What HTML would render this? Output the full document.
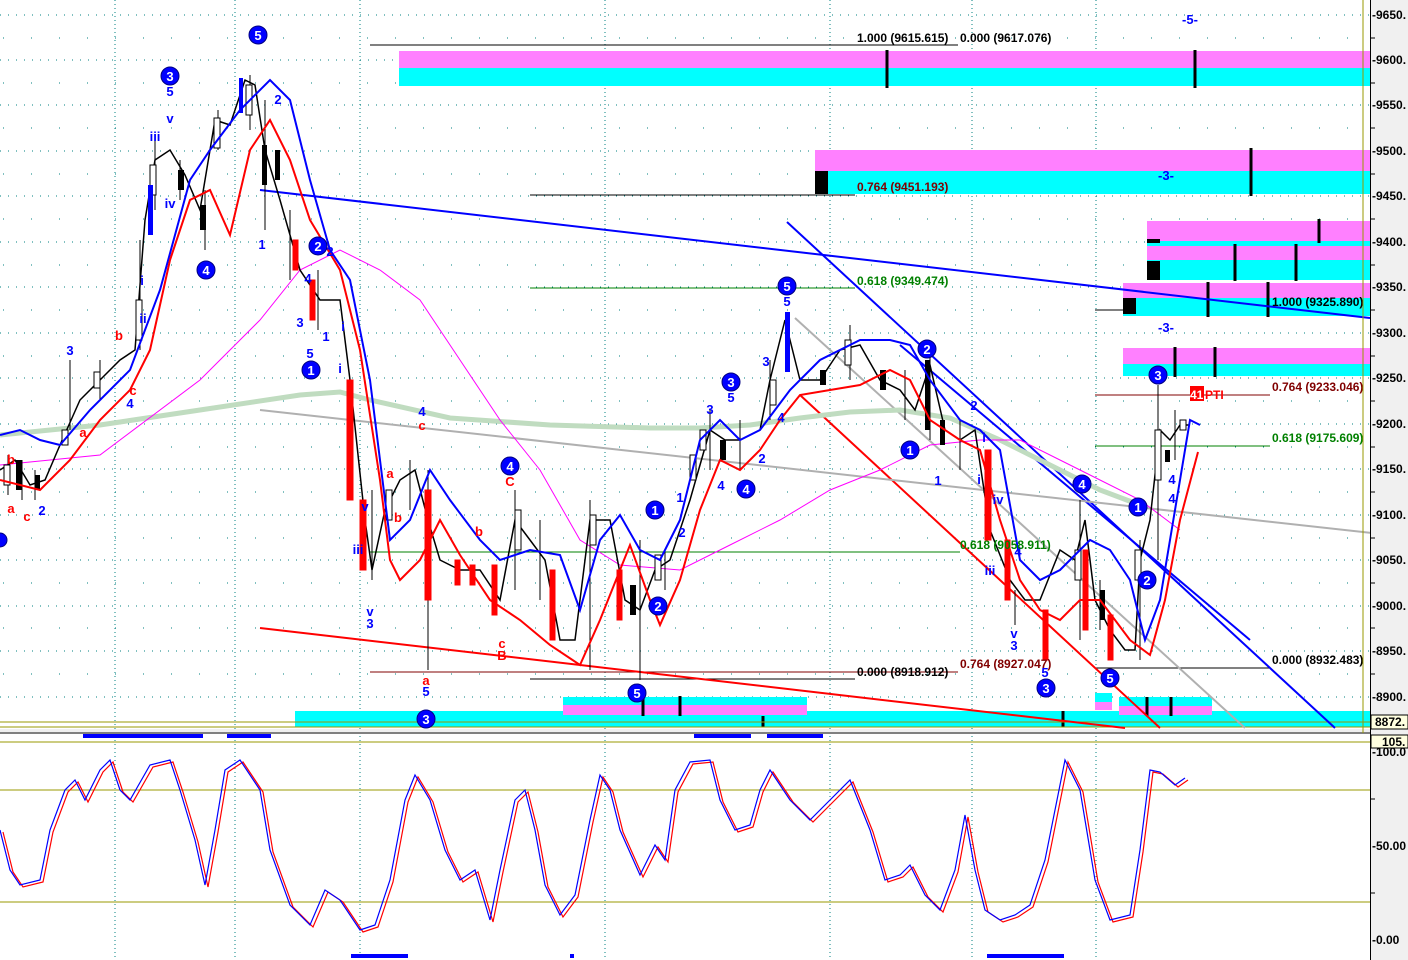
<!DOCTYPE html>
<html><head><meta charset="utf-8"><style>
html,body{margin:0;padding:0;background:#fff;width:1408px;height:960px;overflow:hidden}
svg{display:block}
text{font-family:"Liberation Sans",sans-serif}
</style></head><body>
<svg width="1408" height="960" viewBox="0 0 1408 960" xmlns="http://www.w3.org/2000/svg">
<rect width="1408" height="960" fill="#fff"/>
<g stroke="#008080" stroke-width="1">
<g stroke-dasharray="1 7">
<line x1="0" y1="15" x2="1370" y2="15"/><line x1="0" y1="60" x2="1370" y2="60"/><line x1="0" y1="105" x2="1370" y2="105"/><line x1="0" y1="151" x2="1370" y2="151"/><line x1="0" y1="196" x2="1370" y2="196"/><line x1="0" y1="242" x2="1370" y2="242"/><line x1="0" y1="287" x2="1370" y2="287"/><line x1="0" y1="333" x2="1370" y2="333"/><line x1="0" y1="378" x2="1370" y2="378"/><line x1="0" y1="424" x2="1370" y2="424"/><line x1="0" y1="469" x2="1370" y2="469"/><line x1="0" y1="515" x2="1370" y2="515"/><line x1="0" y1="560" x2="1370" y2="560"/><line x1="0" y1="606" x2="1370" y2="606"/><line x1="0" y1="651" x2="1370" y2="651"/><line x1="0" y1="697" x2="1370" y2="697"/>
</g>
<g stroke-dasharray="1 27">
<line x1="3" y1="38" x2="1370" y2="38"/><line x1="3" y1="83" x2="1370" y2="83"/><line x1="3" y1="128" x2="1370" y2="128"/><line x1="3" y1="174" x2="1370" y2="174"/><line x1="3" y1="219" x2="1370" y2="219"/><line x1="3" y1="265" x2="1370" y2="265"/><line x1="3" y1="310" x2="1370" y2="310"/><line x1="3" y1="356" x2="1370" y2="356"/><line x1="3" y1="401" x2="1370" y2="401"/><line x1="3" y1="447" x2="1370" y2="447"/><line x1="3" y1="492" x2="1370" y2="492"/><line x1="3" y1="538" x2="1370" y2="538"/><line x1="3" y1="583" x2="1370" y2="583"/><line x1="3" y1="628" x2="1370" y2="628"/><line x1="3" y1="674" x2="1370" y2="674"/>
</g>
<g stroke-dasharray="1 3">
<line x1="115" y1="0" x2="115" y2="960"/><line x1="235" y1="0" x2="235" y2="960"/><line x1="360" y1="0" x2="360" y2="960"/><line x1="605" y1="0" x2="605" y2="960"/><line x1="830" y1="0" x2="830" y2="960"/><line x1="972" y1="0" x2="972" y2="960"/><line x1="1096" y1="0" x2="1096" y2="960"/>
</g>
</g>
<rect x="399" y="51" width="971" height="17" fill="#ff80ff"/><rect x="399" y="68" width="971" height="18" fill="#00ffff"/>
<rect x="815" y="150" width="555" height="21" fill="#ff80ff"/><rect x="815" y="171" width="555" height="23" fill="#00ffff"/>
<rect x="815" y="171" width="13" height="23" fill="#000"/>
<rect x="1147" y="221" width="223" height="20" fill="#ff80ff"/><rect x="1147" y="241" width="223" height="5" fill="#00ffff"/><rect x="1147" y="246" width="223" height="14" fill="#ff80ff"/><rect x="1147" y="260" width="223" height="20" fill="#00ffff"/>
<rect x="1147" y="239" width="13" height="4" fill="#000"/><rect x="1147" y="261" width="13" height="19" fill="#000"/>
<rect x="1123" y="283" width="247" height="15" fill="#ff80ff"/><rect x="1123" y="298" width="247" height="18" fill="#00ffff"/>
<rect x="1123" y="298" width="13" height="16" fill="#000"/>
<rect x="1123" y="348" width="247" height="16" fill="#ff80ff"/><rect x="1123" y="364" width="247" height="12" fill="#00ffff"/>
<rect x="295" y="711" width="1075" height="16" fill="#00ffff"/>
<rect x="563" y="697" width="244" height="8" fill="#00ffff"/><rect x="563" y="705" width="244" height="10" fill="#ff80ff"/>
<rect x="1095" y="693" width="17" height="9" fill="#00ffff"/><rect x="1095" y="702" width="17" height="8" fill="#ff80ff"/>
<rect x="1119" y="697" width="93" height="9" fill="#00ffff"/><rect x="1119" y="706" width="93" height="9" fill="#ff80ff"/>
<g stroke="#000" stroke-width="3">
<line x1="887" y1="50" x2="887" y2="88"/><line x1="1195" y1="50" x2="1195" y2="88"/><line x1="1251" y1="148" x2="1251" y2="196"/><line x1="1319" y1="219" x2="1319" y2="243"/><line x1="1235" y1="244" x2="1235" y2="281"/><line x1="1296" y1="244" x2="1296" y2="281"/><line x1="1208" y1="282" x2="1208" y2="317"/><line x1="1268" y1="282" x2="1268" y2="317"/><line x1="1175" y1="347" x2="1175" y2="377"/><line x1="1215" y1="347" x2="1215" y2="377"/><line x1="643" y1="696" x2="643" y2="716"/><line x1="680" y1="696" x2="680" y2="716"/><line x1="1147" y1="697" x2="1147" y2="716"/><line x1="1171" y1="697" x2="1171" y2="716"/><line x1="1063" y1="711" x2="1063" y2="727"/><line x1="763" y1="716" x2="763" y2="727"/>
</g>
<line x1="0" y1="722" x2="1370" y2="722" stroke="#999900"/><line x1="0" y1="727" x2="1370" y2="727" stroke="#999900"/>
<line x1="370" y1="45" x2="958" y2="45" stroke="#000"/>
<line x1="530" y1="195" x2="855" y2="195" stroke="#000"/>
<line x1="530" y1="288" x2="855" y2="288" stroke="#008000"/>
<line x1="370" y1="552" x2="960" y2="552" stroke="#008000"/>
<line x1="370" y1="672" x2="958" y2="672" stroke="#800000"/>
<line x1="530" y1="679" x2="855" y2="679" stroke="#000"/>
<line x1="1095" y1="668" x2="1270" y2="668" stroke="#000"/>
<line x1="1095" y1="395" x2="1270" y2="395" stroke="#800000"/>
<line x1="1095" y1="446" x2="1270" y2="446" stroke="#008000"/>
<line x1="1095" y1="310" x2="1130" y2="310" stroke="#000"/>
<line x1="260" y1="190" x2="1370" y2="318" stroke="#0000ff" stroke-width="2"/>
<line x1="787" y1="222" x2="1335" y2="728" stroke="#0000ff" stroke-width="2"/>
<line x1="900" y1="345" x2="1250" y2="640" stroke="#0000ff" stroke-width="2"/>
<line x1="800" y1="395" x2="1160" y2="728" stroke="#ff0000" stroke-width="2"/>
<line x1="260" y1="628" x2="1125" y2="728" stroke="#ff0000" stroke-width="2"/>
<line x1="260" y1="410" x2="1408" y2="537" stroke="#b0b0b0" stroke-width="2"/>
<line x1="795" y1="318" x2="1245" y2="728" stroke="#b0b0b0" stroke-width="2"/>
<polyline fill="none" stroke="#c0dcc0" stroke-width="5" points="0,435 100,425 200,410 300,395 340,392 370,400 450,418 550,425 650,428 700,428 750,425 800,418 850,412 900,410 950,418 1000,440 1050,465 1100,490 1140,505"/>
<polyline fill="none" stroke="#ff00ff" stroke-width="1" points="0,465 100,455 200,380 260,320 300,270 340,250 380,270 420,300 460,360 500,420 540,470 580,540 620,565 680,570 730,545 780,520 830,490 880,470 930,445 980,440 1020,440 1060,460 1100,480 1140,500 1180,530"/>
<!-- price wicks -->
<g stroke="#000" stroke-width="1">
<line x1="8" y1="455" x2="8" y2="495"/><line x1="22" y1="460" x2="22" y2="500"/><line x1="35" y1="470" x2="35" y2="500"/><line x1="70" y1="360" x2="70" y2="430"/><line x1="100" y1="360" x2="100" y2="400"/><line x1="140" y1="240" x2="140" y2="350"/><line x1="155" y1="140" x2="155" y2="210"/><line x1="180" y1="160" x2="180" y2="200"/><line x1="205" y1="190" x2="205" y2="250"/><line x1="218" y1="110" x2="218" y2="150"/><line x1="250" y1="75" x2="250" y2="130"/><line x1="265" y1="100" x2="265" y2="230"/><line x1="290" y1="210" x2="290" y2="280"/><line x1="318" y1="270" x2="318" y2="330"/><line x1="372" y1="490" x2="372" y2="580"/><line x1="410" y1="460" x2="410" y2="510"/><line x1="428" y1="470" x2="428" y2="670"/><line x1="515" y1="490" x2="515" y2="590"/><line x1="540" y1="520" x2="540" y2="600"/><line x1="590" y1="500" x2="590" y2="670"/><line x1="640" y1="540" x2="640" y2="680"/><line x1="665" y1="550" x2="665" y2="590"/><line x1="710" y1="410" x2="710" y2="470"/><line x1="740" y1="420" x2="740" y2="470"/><line x1="770" y1="360" x2="770" y2="420"/><line x1="850" y1="325" x2="850" y2="380"/><line x1="905" y1="370" x2="905" y2="420"/><line x1="930" y1="355" x2="930" y2="440"/><line x1="960" y1="420" x2="960" y2="470"/><line x1="1015" y1="590" x2="1015" y2="625"/><line x1="1080" y1="500" x2="1080" y2="640"/><line x1="1100" y1="580" x2="1100" y2="630"/><line x1="1140" y1="540" x2="1140" y2="660"/><line x1="1158" y1="385" x2="1158" y2="560"/><line x1="1175" y1="410" x2="1175" y2="460"/>
</g>
<polyline fill="none" stroke="#000" stroke-width="1.5" points="0,470 15,460 30,485 45,480 60,445 80,400 100,380 120,360 135,350 145,220 155,160 170,150 185,175 200,210 215,120 230,125 245,80 255,85 265,150 280,200 300,270 320,300 340,300 350,380 365,520 372,570 385,510 400,480 415,470 428,520 440,560 460,570 480,570 500,600 515,520 530,540 545,560 560,640 575,640 590,520 610,520 625,600 640,610 655,570 670,560 690,500 710,430 725,440 740,440 760,430 770,380 785,320 800,380 820,380 840,350 860,345 880,380 900,390 915,410 930,365 945,430 960,440 975,430 990,530 1010,580 1025,600 1040,600 1060,550 1075,560 1085,520 1095,600 1110,630 1125,650 1135,650 1140,560 1150,520 1160,430 1170,440 1180,425 1190,425"/>
<g fill="#fff" stroke="#000" stroke-width="1">
<rect x="4" y="465" width="6" height="20"/><rect x="62" y="430" width="6" height="15"/><rect x="94" y="372" width="6" height="16"/><rect x="136" y="300" width="6" height="40"/><rect x="150" y="165" width="6" height="30"/><rect x="214" y="118" width="6" height="30"/><rect x="246" y="85" width="6" height="30"/><rect x="386" y="490" width="6" height="30"/><rect x="515" y="510" width="6" height="40"/><rect x="590" y="515" width="6" height="30"/><rect x="655" y="555" width="6" height="25"/><rect x="690" y="455" width="6" height="25"/><rect x="700" y="430" width="6" height="20"/><rect x="770" y="380" width="6" height="25"/><rect x="845" y="340" width="6" height="25"/><rect x="1075" y="550" width="6" height="30"/><rect x="1135" y="550" width="6" height="30"/><rect x="1155" y="430" width="6" height="50"/><rect x="1180" y="420" width="6" height="10"/>
</g>
<g fill="#000"><rect x="16" y="460" width="6" height="30"/><rect x="35" y="475" width="5" height="15"/><rect x="178" y="170" width="6" height="20"/><rect x="200" y="205" width="6" height="25"/><rect x="262" y="145" width="5" height="40"/><rect x="275" y="150" width="5" height="30"/><rect x="630" y="585" width="6" height="30"/><rect x="720" y="440" width="6" height="20"/><rect x="820" y="370" width="6" height="15"/><rect x="880" y="370" width="6" height="20"/><rect x="925" y="360" width="5" height="70"/><rect x="940" y="420" width="5" height="25"/><rect x="1100" y="590" width="5" height="30"/><rect x="1165" y="450" width="5" height="12"/></g>
<g fill="#ff0000" stroke="#ff0000"><rect x="347" y="380" width="6" height="120"/><rect x="360" y="500" width="6" height="70"/><rect x="425" y="490" width="6" height="110"/><rect x="492" y="565" width="5" height="50"/><rect x="550" y="570" width="5" height="70"/><rect x="617" y="570" width="5" height="50"/><rect x="985" y="450" width="6" height="90"/><rect x="1005" y="540" width="5" height="60"/><rect x="1043" y="610" width="5" height="50"/><rect x="1083" y="550" width="5" height="80"/><rect x="1108" y="615" width="5" height="45"/><rect x="293" y="240" width="5" height="30"/><rect x="310" y="280" width="5" height="40"/><rect x="455" y="560" width="5" height="25"/><rect x="470" y="565" width="5" height="20"/></g>
<g fill="#0000ff"><rect x="239" y="78" width="4" height="35"/><rect x="785" y="312" width="5" height="60"/><rect x="148" y="185" width="5" height="50"/></g>
<polyline fill="none" stroke="#0000ff" stroke-width="2" points="0,435 20,430 40,440 60,445 90,410 130,370 160,290 190,180 210,150 240,110 270,80 290,100 310,180 330,250 350,280 370,380 390,540 410,520 430,470 450,500 480,540 500,560 530,550 560,555 580,610 600,540 620,515 640,550 660,560 680,520 700,440 720,420 740,440 760,430 790,390 820,360 860,340 890,340 910,345 930,380 960,420 980,430 1000,450 1020,560 1040,580 1060,570 1090,540 1110,550 1130,580 1145,640 1160,600 1175,510 1190,420 1200,425"/>
<polyline fill="none" stroke="#ff0000" stroke-width="2" points="0,480 40,490 70,460 100,420 130,390 150,350 170,260 190,200 210,190 230,235 250,150 270,120 290,160 310,220 340,270 360,350 380,480 390,560 400,580 420,560 440,520 460,555 490,600 520,620 550,645 580,665 600,620 630,545 650,600 660,625 680,580 700,510 720,460 740,470 760,450 780,420 800,395 830,390 860,385 890,370 910,380 930,420 960,440 980,450 1000,520 1020,580 1040,610 1060,620 1080,600 1100,600 1130,640 1150,655 1165,600 1180,520 1198,452"/>
<g fill="#0000ff" stroke="#000080" stroke-width="1">
<circle cx="258" cy="35" r="9"/><circle cx="170" cy="76" r="9"/><circle cx="206" cy="270" r="9"/><circle cx="318" cy="246" r="9"/><circle cx="311" cy="370" r="9"/><circle cx="510" cy="466" r="9"/><circle cx="655" cy="510" r="9"/><circle cx="658" cy="606" r="9"/><circle cx="637" cy="693" r="9"/><circle cx="426" cy="719" r="9"/><circle cx="731" cy="382" r="9"/><circle cx="746" cy="489" r="9"/><circle cx="787" cy="286" r="9"/><circle cx="927" cy="349" r="9"/><circle cx="910" cy="450" r="9"/><circle cx="1082" cy="484" r="9"/><circle cx="1138" cy="507" r="9"/><circle cx="1147" cy="580" r="9"/><circle cx="1158" cy="375" r="9"/><circle cx="1110" cy="678" r="9"/><circle cx="1046" cy="688" r="9"/><circle cx="0" cy="540" r="7"/>
</g>
<g fill="#fff" font-size="13" font-weight="bold" text-anchor="middle">
<text x="258" y="40">5</text><text x="170" y="81">3</text><text x="206" y="275">4</text><text x="318" y="251">2</text><text x="311" y="375">1</text><text x="510" y="471">4</text><text x="655" y="515">1</text><text x="658" y="611">2</text><text x="637" y="698">5</text><text x="426" y="724">3</text><text x="731" y="387">3</text><text x="746" y="494">4</text><text x="787" y="291">5</text><text x="927" y="354">2</text><text x="910" y="455">1</text><text x="1082" y="489">4</text><text x="1138" y="512">1</text><text x="1147" y="585">2</text><text x="1158" y="380">3</text><text x="1110" y="683">5</text><text x="1046" y="693">3</text>
</g>
<g fill="#0000ff" font-size="13" font-weight="bold" text-anchor="middle">
<text x="170" y="96">5</text><text x="170" y="123">v</text><text x="155" y="141">iii</text><text x="170" y="208">iv</text><text x="142" y="285">i</text><text x="143" y="323">ii</text><text x="70" y="355">3</text><text x="130" y="408">4</text><text x="42" y="515">2</text><text x="278" y="104">2</text><text x="262" y="249">1</text><text x="330" y="256">2</text><text x="300" y="327">3</text><text x="308" y="283">4</text><text x="326" y="341">1</text><text x="310" y="358">5</text><text x="343" y="331">i</text><text x="340" y="373">i</text><text x="365" y="511">v</text><text x="358" y="554">iii</text><text x="370" y="616">v</text><text x="370" y="628">3</text><text x="422" y="416">4</text><text x="426" y="696">5</text><text x="680" y="502">1</text><text x="682" y="537">2</text><text x="710" y="414">3</text><text x="731" y="402">5</text><text x="721" y="490">4</text><text x="766" y="366">3</text><text x="781" y="422">4</text><text x="762" y="463">2</text><text x="787" y="306">5</text><text x="974" y="410">2</text><text x="984" y="442">i</text><text x="938" y="485">1</text><text x="998" y="504">iv</text><text x="979" y="484">i</text><text x="990" y="575">iii</text><text x="1014" y="638">v</text><text x="1014" y="650">3</text><text x="1045" y="677">5</text><text x="1018" y="556">4</text><text x="1166" y="332">-3-</text><text x="1166" y="180">-3-</text><text x="1190" y="24">-5-</text><text x="1172" y="484">4</text><text x="1172" y="503">4</text>
</g>
<g fill="#ff0000" font-size="13" font-weight="bold" text-anchor="middle">
<text x="119" y="340">b</text><text x="133" y="395">c</text><text x="11" y="464">b</text><text x="11" y="513">a</text><text x="27" y="521">c</text><text x="83" y="437">a</text><text x="422" y="430">c</text><text x="390" y="478">a</text><text x="398" y="522">b</text><text x="426" y="685">a</text><text x="510" y="486">C</text><text x="479" y="536">b</text><text x="502" y="648">c</text><text x="502" y="660">B</text>
</g>
<g font-size="12" font-weight="bold">
<text x="857" y="42" fill="#000">1.000 (9615.615)</text><text x="960" y="42" fill="#000">0.000 (9617.076)</text>
<text x="857" y="191" fill="#800000">0.764 (9451.193)</text>
<text x="857" y="285" fill="#008000">0.618 (9349.474)</text>
<text x="960" y="549" fill="#008000">0.618 (9058.911)</text>
<text x="857" y="676" fill="#000">0.000 (8918.912)</text>
<text x="960" y="668" fill="#800000">0.764 (8927.047)</text>
<text x="1272" y="306" fill="#000">1.000 (9325.890)</text>
<text x="1272" y="391" fill="#800000">0.764 (9233.046)</text>
<text x="1272" y="442" fill="#008000">0.618 (9175.609)</text>
<text x="1272" y="664" fill="#000">0.000 (8932.483)</text>
</g>
<rect x="1190" y="386" width="14" height="15" fill="#ff0000"/>
<text x="1190" y="399" fill="#fff" font-size="12" font-weight="bold">41</text>
<text x="1205" y="399" fill="#ff0000" font-size="12" font-weight="bold">PTI</text>
<g fill="#0000ff"><rect x="83" y="734" width="120" height="4"/><rect x="227" y="734" width="44" height="4"/><rect x="694" y="734" width="57" height="4"/><rect x="767" y="734" width="56" height="4"/></g>
<rect x="0" y="729" width="1370" height="4" fill="#f0f0f0"/>
<line x1="0" y1="733" x2="1408" y2="733" stroke="#808080" stroke-width="2"/>
<line x1="0" y1="742" x2="1370" y2="742" stroke="#999900"/>
<line x1="0" y1="790" x2="1370" y2="790" stroke="#999900"/>
<line x1="0" y1="902" x2="1370" y2="902" stroke="#999900"/>
<g fill="#0000ff"><rect x="351" y="954" width="57" height="4"/><rect x="570" y="954" width="4" height="4"/><rect x="987" y="954" width="77" height="4"/></g>
<polyline fill="none" stroke="#ff0000" stroke-width="1.2" transform="translate(3,2)" points="0,830 10,870 20,885 40,880 50,830 65,790 75,780 85,800 100,770 110,760 120,790 130,800 150,765 170,760 180,790 195,840 205,885 215,830 225,770 240,760 260,790 270,850 290,905 310,925 325,890 340,900 360,930 375,925 390,880 405,800 415,775 430,800 445,850 460,880 475,870 490,920 500,870 515,800 525,790 535,830 545,885 560,915 575,895 590,820 600,775 610,790 620,830 640,875 655,845 665,860 675,790 690,762 710,760 720,800 735,830 750,825 760,790 770,770 790,800 810,820 830,800 850,780 870,830 885,880 900,875 910,865 925,895 940,910 955,870 965,815 975,870 985,910 1000,920 1015,915 1030,905 1045,860 1055,810 1065,760 1080,790 1095,880 1110,920 1130,915 1140,850 1150,770 1160,772 1175,785 1185,778"/>
<polyline fill="none" stroke="#0000ff" stroke-width="1.2" points="0,830 10,870 20,885 40,880 50,830 65,790 75,780 85,800 100,770 110,760 120,790 130,800 150,765 170,760 180,790 195,840 205,885 215,830 225,770 240,760 260,790 270,850 290,905 310,925 325,890 340,900 360,930 375,925 390,880 405,800 415,775 430,800 445,850 460,880 475,870 490,920 500,870 515,800 525,790 535,830 545,885 560,915 575,895 590,820 600,775 610,790 620,830 640,875 655,845 665,860 675,790 690,762 710,760 720,800 735,830 750,825 760,790 770,770 790,800 810,820 830,800 850,780 870,830 885,880 900,875 910,865 925,895 940,910 955,870 965,815 975,870 985,910 1000,920 1015,915 1030,905 1045,860 1055,810 1065,760 1080,790 1095,880 1110,920 1130,915 1140,850 1150,770 1160,772 1175,785 1185,778"/>
<rect x="1370" y="0" width="38" height="960" fill="#f0f0f0"/>
<line x1="1370.5" y1="0" x2="1370.5" y2="960" stroke="#000"/>
<line x1="1363" y1="0" x2="1363" y2="733" stroke="#999900"/>
<g stroke="#000"><line x1="1371" y1="38" x2="1375" y2="38"/><line x1="1371" y1="83" x2="1375" y2="83"/><line x1="1371" y1="128" x2="1375" y2="128"/><line x1="1371" y1="174" x2="1375" y2="174"/><line x1="1371" y1="219" x2="1375" y2="219"/><line x1="1371" y1="265" x2="1375" y2="265"/><line x1="1371" y1="310" x2="1375" y2="310"/><line x1="1371" y1="356" x2="1375" y2="356"/><line x1="1371" y1="401" x2="1375" y2="401"/><line x1="1371" y1="447" x2="1375" y2="447"/><line x1="1371" y1="492" x2="1375" y2="492"/><line x1="1371" y1="538" x2="1375" y2="538"/><line x1="1371" y1="583" x2="1375" y2="583"/><line x1="1371" y1="628" x2="1375" y2="628"/><line x1="1371" y1="674" x2="1375" y2="674"/><line x1="1371" y1="799" x2="1375" y2="799"/><line x1="1371" y1="893" x2="1375" y2="893"/></g>
<g font-size="12" font-weight="bold" fill="#000">
<text x="1372" y="19">-9650.</text><text x="1372" y="64">-9600.</text><text x="1372" y="109">-9550.</text><text x="1372" y="155">-9500.</text><text x="1372" y="200">-9450.</text><text x="1372" y="246">-9400.</text><text x="1372" y="291">-9350.</text><text x="1372" y="337">-9300.</text><text x="1372" y="382">-9250.</text><text x="1372" y="428">-9200.</text><text x="1372" y="473">-9150.</text><text x="1372" y="519">-9100.</text><text x="1372" y="564">-9050.</text><text x="1372" y="610">-9000.</text><text x="1372" y="655">-8950.</text><text x="1372" y="701">-8900.</text>
<text x="1372" y="756">-100.0</text><text x="1372" y="850">-50.00</text><text x="1372" y="944">-0.00</text>
</g>
<rect x="1371" y="715" width="37" height="14" fill="#ffffe0" stroke="#000"/>
<text x="1375" y="726" font-size="12" font-weight="bold">8872.</text>
<rect x="1371" y="735" width="37" height="13" fill="#ffffe0" stroke="#000"/>
<text x="1382" y="746" font-size="12" font-weight="bold">105.</text>
</svg>
</body></html>
